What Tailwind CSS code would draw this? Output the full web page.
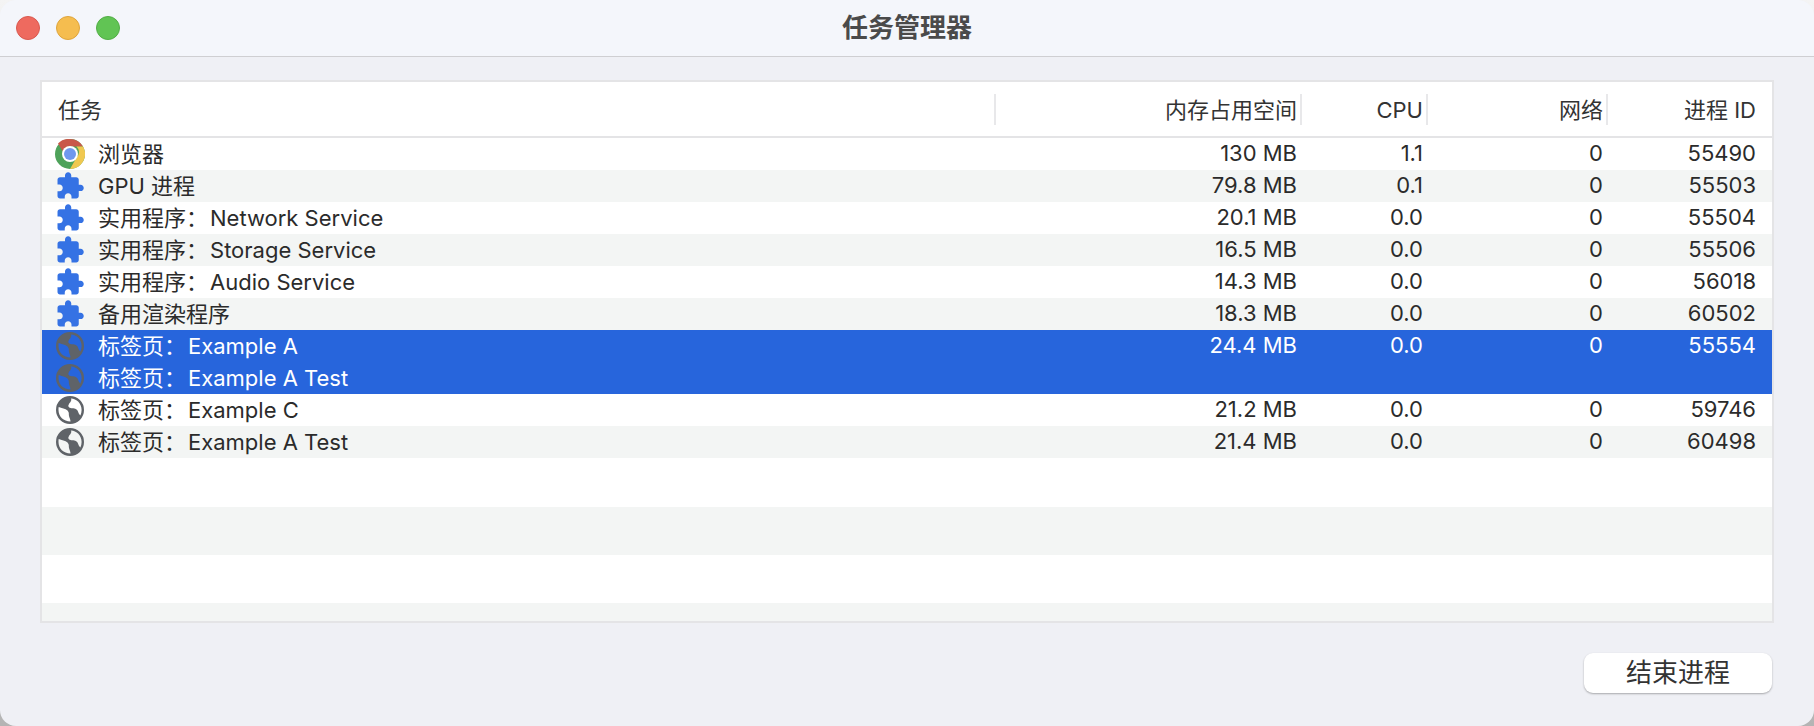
<!DOCTYPE html>
<html lang="zh-CN">
  <head>
    <meta charset="UTF-8" />
    <title>任务管理器</title>
    <script src="https://cdn.jsdelivr.net/npm/@tailwindcss/browser@4"></script>
  </head>
  <body class="h-[726px] bg-gradient-to-b from-[#f4f4f4] to-[#b4b4b4] font-['Inter','Noto_Sans_CJK_SC',sans-serif] text-[22px] leading-none text-[#2b2b2b] overflow-hidden">
    <svg class="hidden">
      <defs>
        <symbol id="puzzle" viewBox="0 0 24 24">
          <path fill="#3572e4" d="M20.5 11H19V7c0-1.1-.9-2-2-2h-4V3.5C13 2.12 11.88 1 10.5 1S8 2.12 8 3.5V5H4c-1.1 0-1.99.9-1.99 2v3.8H3.5c1.49 0 2.7 1.21 2.7 2.7s-1.21 2.7-2.7 2.7H2V20c0 1.1.9 2 2 2h3.8v-1.5c0-1.49 1.21-2.7 2.7-2.7 1.49 0 2.7 1.21 2.7 2.7V22H17c1.1 0 2-.9 2-2v-4h1.5c1.38 0 2.5-1.12 2.5-2.5S21.88 11 20.500 11z" />
        </symbol>
        <symbol id="globe" viewBox="0 0 28 28">
          <path fill="#5f6368" fill-rule="evenodd" d="M14 0a14 14 0 1 1 0 28a14 14 0 0 1 0-28zM2.700 11C5.500 12 9.500 12.500 11.500 14.500C13.500 16.500 12.500 18 13 20C13.500 22 14.500 23.500 14.500 25.500C7.500 25.500 2.500 20.500 2.500 14C2.500 13 2.500 12 2.700 11zM15 2.600C16 5 14 6.500 13 8C11.500 10 12.500 11.500 14.500 12C17 12.500 20 12 21.500 14.500C22.500 16.500 23 18.500 24.400 19.500C25.200 17.800 25.600 15.800 25.600 14C25.600 7.600 20.500 2.600 15 2.600z" />
        </symbol>
      </defs>
    </svg>

    <div class="h-[726px] bg-[#eff0f5] rounded-[16px] flex flex-col">
      <!-- title bar -->
      <div class="h-[57px] shrink-0 bg-[#f4f6fb] border-b border-[#cfcfd2] rounded-t-[16px] relative flex items-center justify-center">
        <div class="absolute left-[16px] top-[16px] flex gap-[16px]">
          <span class="w-[24px] h-[24px] rounded-full bg-[#ee6a5f] border border-[#d9594f]"></span>
          <span class="w-[24px] h-[24px] rounded-full bg-[#f5bd4f] border border-[#dfa53c]"></span>
          <span class="w-[24px] h-[24px] rounded-full bg-[#61c454] border border-[#52ae46]"></span>
        </div>
        <h1 class="text-[26px] font-semibold text-[#4a4a4a]">任务管理器</h1>
      </div>

      <!-- task table -->
      <div class="mt-[23px] ml-[40px] mr-[40px] h-[543px] border-2 border-[#e4e4e6] bg-white flex flex-col">
        <div class="h-[56px] shrink-0 border-b-2 border-[#e4e4e6] grid grid-cols-[954px_306px_126px_180px_164px] items-center text-[#333]">
          <div class="h-[31px] pl-[16px] pt-[2px] border-r-2 border-[#e8e8ea] flex items-center">任务</div>
          <div class="h-[31px] pr-[3px] pt-[2px] border-r-2 border-[#e8e8ea] flex items-center justify-end">内存占用空间</div>
          <div class="h-[31px] pr-[3px] pt-[2px] border-r-2 border-[#e8e8ea] flex items-center justify-end">CPU</div>
          <div class="h-[31px] pr-[3px] pt-[2px] border-r-2 border-[#e8e8ea] flex items-center justify-end">网络</div>
          <div class="h-[31px] pr-[16px] pt-[2px] flex items-center justify-end">进程 ID</div>
        </div>

        <div class="h-[32px] grid grid-cols-[954px_306px_126px_180px_164px] items-center">
          <div class="flex items-center pl-[13px] gap-[13px]">
            <svg class="w-[30px] h-[30px]" viewBox="0 0 30 30">
              <circle cx="15" cy="15" r="15" fill="#4ea25a" />
              <path fill="#c9584a" d="M15 0a15 15 0 0 1 13 7.500H15a7.500 7.500 0 0 0-7.100 5L3 4.500A15 15 0 0 1 15 0z" />
              <path fill="#f0c850" d="M28 7.500A15 15 0 0 1 15 30l6.500-11.300a7.500 7.500 0 0 0 0-11.200z" />
              <circle cx="15" cy="15" r="8" fill="#fff" />
              <circle cx="15" cy="15" r="6" fill="#6f98ee" />
            </svg>
            <span>浏览器</span>
          </div>
          <div class="pr-[5px] pb-[2px] text-right">130 MB</div>
          <div class="pr-[5px] pb-[2px] text-right">1.1</div>
          <div class="pr-[5px] pb-[2px] text-right">0</div>
          <div class="pr-[16px] pb-[2px] text-right">55490</div>
        </div>

        <div class="h-[32px] bg-[#f3f5f4] grid grid-cols-[954px_306px_126px_180px_164px] items-center">
          <div class="flex items-center pl-[13px] gap-[13px]"><svg class="w-[30px] h-[30px]"><use href="#puzzle" /></svg><span>GPU 进程</span></div>
          <div class="pr-[5px] pb-[2px] text-right">79.8 MB</div>
          <div class="pr-[5px] pb-[2px] text-right">0.1</div>
          <div class="pr-[5px] pb-[2px] text-right">0</div>
          <div class="pr-[16px] pb-[2px] text-right">55503</div>
        </div>

        <div class="h-[32px] grid grid-cols-[954px_306px_126px_180px_164px] items-center">
          <div class="flex items-center pl-[13px] gap-[13px]"><svg class="w-[30px] h-[30px]"><use href="#puzzle" /></svg><span>实用程序：<span class="ml-[2px]">Network Service</span></span></div>
          <div class="pr-[5px] pb-[2px] text-right">20.1 MB</div>
          <div class="pr-[5px] pb-[2px] text-right">0.0</div>
          <div class="pr-[5px] pb-[2px] text-right">0</div>
          <div class="pr-[16px] pb-[2px] text-right">55504</div>
        </div>

        <div class="h-[32px] bg-[#f3f5f4] grid grid-cols-[954px_306px_126px_180px_164px] items-center">
          <div class="flex items-center pl-[13px] gap-[13px]"><svg class="w-[30px] h-[30px]"><use href="#puzzle" /></svg><span>实用程序：<span class="ml-[2px]">Storage Service</span></span></div>
          <div class="pr-[5px] pb-[2px] text-right">16.5 MB</div>
          <div class="pr-[5px] pb-[2px] text-right">0.0</div>
          <div class="pr-[5px] pb-[2px] text-right">0</div>
          <div class="pr-[16px] pb-[2px] text-right">55506</div>
        </div>

        <div class="h-[32px] grid grid-cols-[954px_306px_126px_180px_164px] items-center">
          <div class="flex items-center pl-[13px] gap-[13px]"><svg class="w-[30px] h-[30px]"><use href="#puzzle" /></svg><span>实用程序：<span class="ml-[2px]">Audio Service</span></span></div>
          <div class="pr-[5px] pb-[2px] text-right">14.3 MB</div>
          <div class="pr-[5px] pb-[2px] text-right">0.0</div>
          <div class="pr-[5px] pb-[2px] text-right">0</div>
          <div class="pr-[16px] pb-[2px] text-right">56018</div>
        </div>

        <div class="h-[32px] bg-[#f3f5f4] grid grid-cols-[954px_306px_126px_180px_164px] items-center">
          <div class="flex items-center pl-[13px] gap-[13px]"><svg class="w-[30px] h-[30px]"><use href="#puzzle" /></svg><span>备用渲染程序</span></div>
          <div class="pr-[5px] pb-[2px] text-right">18.3 MB</div>
          <div class="pr-[5px] pb-[2px] text-right">0.0</div>
          <div class="pr-[5px] pb-[2px] text-right">0</div>
          <div class="pr-[16px] pb-[2px] text-right">60502</div>
        </div>

        <!-- selected process: two tabs share one process -->
        <div class="h-[64px] bg-[#2765dc] text-white grid grid-cols-[954px_306px_126px_180px_164px] grid-rows-2 items-center">
          <div class="flex items-center pl-[14px] gap-[14px]"><svg class="w-[28px] h-[28px]"><use href="#globe" /></svg><span>标签页：<span class="ml-[2px]">Example A</span></span></div>
          <div class="pr-[5px] pb-[2px] text-right">24.4 MB</div>
          <div class="pr-[5px] pb-[2px] text-right">0.0</div>
          <div class="pr-[5px] pb-[2px] text-right">0</div>
          <div class="pr-[16px] pb-[2px] text-right">55554</div>
          <div class="col-span-5 flex items-center pl-[14px] gap-[14px]"><svg class="w-[28px] h-[28px]"><use href="#globe" /></svg><span>标签页：<span class="ml-[2px]">Example A Test</span></span></div>
        </div>

        <div class="h-[32px] grid grid-cols-[954px_306px_126px_180px_164px] items-center">
          <div class="flex items-center pl-[14px] gap-[14px]"><svg class="w-[28px] h-[28px]"><use href="#globe" /></svg><span>标签页：<span class="ml-[2px]">Example C</span></span></div>
          <div class="pr-[5px] pb-[2px] text-right">21.2 MB</div>
          <div class="pr-[5px] pb-[2px] text-right">0.0</div>
          <div class="pr-[5px] pb-[2px] text-right">0</div>
          <div class="pr-[16px] pb-[2px] text-right">59746</div>
        </div>

        <div class="h-[32px] bg-[#f3f5f4] grid grid-cols-[954px_306px_126px_180px_164px] items-center">
          <div class="flex items-center pl-[14px] gap-[14px]"><svg class="w-[28px] h-[28px]"><use href="#globe" /></svg><span>标签页：<span class="ml-[2px]">Example A Test</span></span></div>
          <div class="pr-[5px] pb-[2px] text-right">21.4 MB</div>
          <div class="pr-[5px] pb-[2px] text-right">0.0</div>
          <div class="pr-[5px] pb-[2px] text-right">0</div>
          <div class="pr-[16px] pb-[2px] text-right">60498</div>
        </div>

        <!-- empty striped rows -->
        <div class="h-[49px]"></div>
        <div class="h-[48px] bg-[#f3f5f4]"></div>
        <div class="h-[48px]"></div>
        <div class="flex-1 bg-[#f3f5f4]"></div>
      </div>

      <div class="mt-[30px] mr-[42px] flex justify-end">
        <button class="w-[188px] h-[40px] bg-white rounded-[9px] shadow-[0_1px_2px_rgba(0,0,0,0.3)] text-[26px] text-[#333]">结束进程</button>
      </div>
    </div>
  </body>
</html>
